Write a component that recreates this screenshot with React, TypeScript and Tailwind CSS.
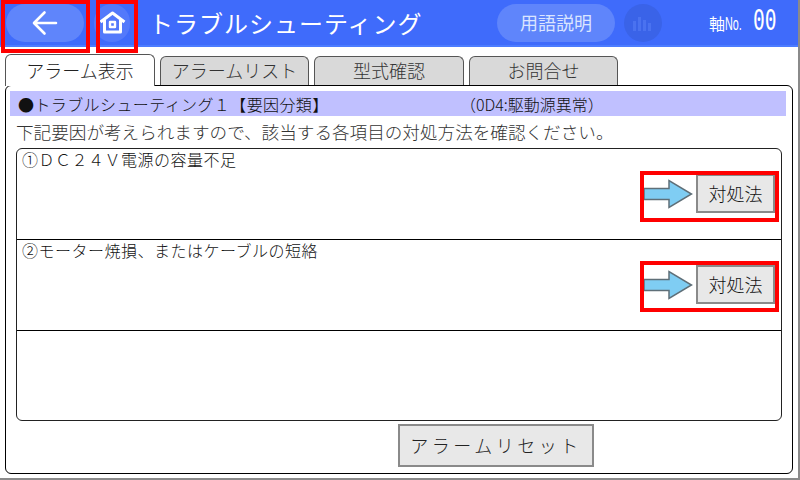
const JP = "font-['Noto_Sans_CJK_JP','Noto_Sans',sans-serif]";

const TABS = [
  { label: "アラームリスト", w: "w-[149px]", ml: "ml-[5px]" },
  { label: "型式確認", w: "w-[150px]", ml: "ml-[5px]" },
  { label: "お問合せ", w: "w-[149px]", ml: "ml-[5px]" },
];

function ArrowMark() {
  return (
    <svg width="50" height="30" viewBox="0 0 50 30" className="shrink-0">
      <path d="M1 9.5H26V1.5L48.5 15L26 28.5V20.5H1Z" fill="#7fcdf3" stroke="#5f6f78" strokeWidth="1.5" />
    </svg>
  );
}

function CauseRow({ text }: { text: string }) {
  return (
    <div className="h-[91px] flex flex-col pl-[5px] pr-[6px] border-b border-black">
      <p className="text-[16px] leading-[19px] tracking-[0.5px] pt-[1px] text-[#111] font-light whitespace-nowrap">{text}</p>
      <div className="flex items-center justify-end mt-[5px] gap-[3px]">
        <ArrowMark />
        <button className="w-[79px] h-[39px] bg-[#e8e8e8] border-2 border-[#8a8a8a] text-[18px] font-light text-[#111]">
          対処法
        </button>
      </div>
    </div>
  );
}

export default function App() {
  return (
    <div className={`relative w-[800px] h-[480px] overflow-hidden bg-white ${JP}`}>
      {/* header */}
      <header className="h-[47px] flex items-center bg-[#3f6bfb] border-b-2 border-[#4c7cff] text-white">
        <button className="ml-[6px] w-[78px] h-[38px] rounded-full bg-[#5f85fb] flex items-center justify-center">
          <svg width="26" height="26" viewBox="0 0 26 26" fill="none" stroke="white" strokeWidth="2.6" strokeLinecap="round" strokeLinejoin="round">
            <path d="M24 13H2.5M12.5 2.5L2 13L12.5 23.5" />
          </svg>
        </button>
        <button className="ml-[11px] w-[36px] h-[38px] rounded-full bg-[#5379fb] flex items-center justify-center -translate-x-[1px]">
          <svg width="27" height="25" viewBox="0 0 27 25" fill="none" stroke="white" strokeWidth="3" strokeLinejoin="round">
            <path d="M1.5 12L13.5 3L25.5 12" />
            <path d="M5.5 10V22H21.5V10" />
            <rect x="11" y="12" width="5" height="5" strokeWidth="2.4" />
          </svg>
        </button>
        <h1 className="ml-[18px] text-[24px] tracking-[1px] font-normal w-[348px] whitespace-nowrap">トラブルシューティング</h1>
        <button className="w-[118px] h-[38px] rounded-full bg-[#5f85fb] text-[18px] text-[#dbe5ff]">用語説明</button>
        <div className="ml-[9px] w-[38px] h-[38px] rounded-full bg-[#3a63e8] flex items-center justify-center">
          <svg width="22" height="18" viewBox="0 0 22 18" fill="#4a72f0">
            <rect x="1" y="7" width="3" height="10" />
            <rect x="6" y="3" width="3" height="14" />
            <rect x="11" y="6" width="3" height="11" />
            <rect x="16" y="9" width="3" height="8" />
          </svg>
        </div>
        <div className="ml-[47px] flex items-baseline">
          <span className="text-[16px]">軸</span>
          <span className="text-[18px] font-['Liberation_Sans',sans-serif] scale-x-[0.6] origin-left w-[17px]">No.</span>
          <span className="ml-[11px] text-[28px] leading-none font-['DejaVu_Sans_Mono',monospace] scale-x-[0.7] origin-left">00</span>
        </div>
      </header>

      {/* tabs */}
      <div className="flex items-end h-[38px] pl-[5px] relative z-10">
        <div className="w-[150px] h-[32px] -mb-[1px] bg-white border border-b-0 border-[#555] rounded-t-[6px] text-center text-[18px] leading-[30px] text-[#222] font-light">
          アラーム表示
        </div>
        {TABS.map((t) => (
          <div
            key={t.label}
            className={`${t.w} ${t.ml} h-[29px] bg-[#d9d9d9] border border-b-0 border-[#555] rounded-t-[6px] text-center text-[18px] leading-[27px] text-[#333] font-light`}
          >
            {t.label}
          </div>
        ))}
      </div>

      {/* panel */}
      <main className="ml-[5px] w-[788px] h-[389px] border border-black rounded-[6px] pl-[4px] pr-[6px] pt-[5px]">
        <div className="h-[25px] flex items-center bg-[#c0c0ff] text-[16px] text-[#111] pl-[8px] font-light whitespace-nowrap">
          <span className="w-[442px] tracking-[0.4px]">●トラブルシューティング１【要因分類】</span>
          <span>（0D4:駆動源異常）</span>
        </div>
        <p className="mt-[4px] ml-[6px] text-[17.6px] leading-[23px] text-[#333] font-light whitespace-nowrap">
          下記要因が考えられますので、該当する各項目の対処方法を確認ください。
        </p>
        <section className="mt-[5px] ml-[6px] mr-[4px] h-[273px] border border-[#222] rounded-[6px] overflow-hidden">
          <CauseRow text="①ＤＣ２４Ｖ電源の容量不足" />
          <CauseRow text="②モーター焼損、またはケーブルの短絡" />
        </section>
        <div className="flex mt-[3px] pl-[388px]">
          <button className="w-[196px] h-[43px] bg-[#e8e8e8] border-2 border-[#8a8a8a] text-[18px] tracking-[3.5px] text-[#222] font-light">
            アラームリセット
          </button>
        </div>
      </main>

      {/* window edges */}
      <div className="absolute right-0 top-0 bottom-0 w-[2px] bg-[#8a8a8a]" />
      <div className="absolute left-0 right-0 bottom-0 h-[2px] bg-[#8a8a8a]" />

      {/* red callouts */}
      <div className="absolute left-[1px] top-0 w-[89px] h-[53px] border-[4px] border-[#f00]" />
      <div className="absolute left-[96px] top-0 w-[42px] h-[53px] border-[4px] border-[#f00]" />
      <div className="absolute left-[640px] top-[171px] w-[139px] h-[51px] border-[4px] border-[#f00]" />
      <div className="absolute left-[640px] top-[261px] w-[139px] h-[51px] border-[4px] border-[#f00]" />
    </div>
  );
}
